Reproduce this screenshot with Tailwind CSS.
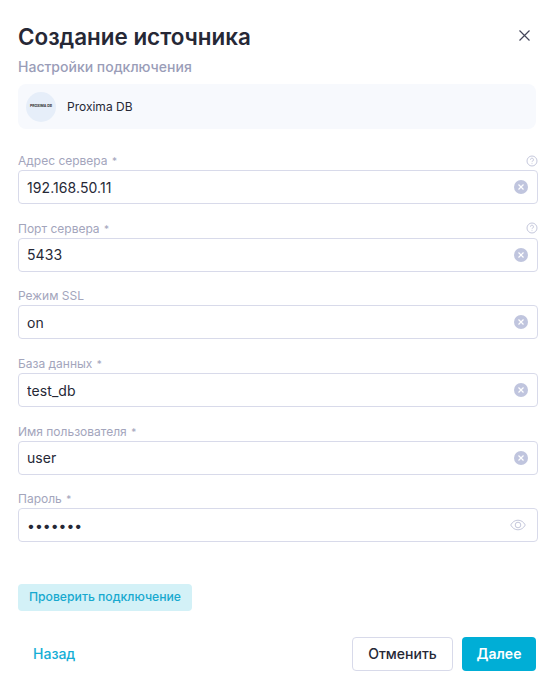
<!DOCTYPE html>
<html lang="ru">
<head>
    <meta charset="UTF-8">
    <meta name="viewport" content="width=device-width, initial-scale=1.0">
    <title>Создание источника</title>
    <script src="https://cdn.jsdelivr.net/npm/@tailwindcss/browser@4"></script>
</head>
<body class="bg-white font-['Inter',sans-serif] text-[#262836]">
<div class="w-[557px] h-[691px] overflow-hidden relative">
    <div class="pl-[18px] pr-[19px] pt-[21px]">
        <div class="flex items-center justify-between h-[32px]">
            <h1 class="text-[22.4px] leading-[32px] font-semibold">Создание источника</h1>
            <button class="mr-[8px] mb-[4px]">
                <svg class="block" width="11" height="11" viewBox="0 0 11 11" fill="none" stroke="#44465a" stroke-width="1.2"><path d="M.5.5l10 10M10.500.5l-10 10"/></svg>
            </button>
        </div>
        <p class="mt-[4px] text-[14px] leading-[20px] font-medium text-[#9a9db8]">Настройки подключения</p>
        <div class="mt-[7px] w-[518px] h-[45px] rounded-[8px] bg-[#f7f9fd] flex items-center pl-[8px]">
            <div class="w-[30px] h-[30px] rounded-full bg-[#e6eef9] flex items-center justify-center text-[3.5px] font-bold text-[#333]">PROXIMA DB</div>
            <span class="ml-[11px] text-[12px] font-normal">Proxima DB</span>
        </div>

        <div class="mt-[23.3px] flex flex-col gap-[15.6px]">
            <div>
                <div class="h-[18px] flex items-center justify-between text-[12px] text-[#a3a5bc]"><label>Адрес сервера <span class="text-[10px] ml-[1px]">*</span></label>
                    <svg class="mb-[1px]" width="12" height="12" viewBox="0 0 12 12" fill="none" stroke="#c5c8dc"><circle cx="6" cy="6" r="5"/><path d="M4.5 4.7a1.5 1.5 0 1 1 2.2 1.3c-.5.3-.7.6-.7 1.1M6 8.300v.8"/></svg>
                </div>
                <div class="relative">
                    <input type="text" value="192.168.50.11" class="w-[520px] h-[34px] rounded-[4px] border border-[#d8daea] pl-[8px] pr-[30px] text-[14px] tracking-[0.08px] outline-none">
                    <svg class="absolute right-[10px] top-[10px]" width="14" height="14" viewBox="0 0 14 14"><circle cx="7" cy="7" r="7" fill="#c0c5de"/><path d="M4.500 4.500l5 5M9.500 4.500l-5 5" stroke="#fff" stroke-width="1.2"/></svg>
                </div>
            </div>
            <div>
                <div class="h-[18px] flex items-center justify-between text-[12px] text-[#a3a5bc]"><label>Порт сервера <span class="text-[10px] ml-[1px]">*</span></label>
                    <svg class="mb-[1px]" width="12" height="12" viewBox="0 0 12 12" fill="none" stroke="#c5c8dc"><circle cx="6" cy="6" r="5"/><path d="M4.5 4.7a1.5 1.5 0 1 1 2.2 1.3c-.5.3-.7.6-.7 1.1M6 8.300v.8"/></svg>
                </div>
                <div class="relative">
                    <input type="text" value="5433" class="w-[520px] h-[34px] rounded-[4px] border border-[#d8daea] pl-[8px] pr-[30px] text-[14px] tracking-[0.08px] outline-none">
                    <svg class="absolute right-[10px] top-[10px]" width="14" height="14" viewBox="0 0 14 14"><circle cx="7" cy="7" r="7" fill="#c0c5de"/><path d="M4.500 4.500l5 5M9.500 4.500l-5 5" stroke="#fff" stroke-width="1.2"/></svg>
                </div>
            </div>
            <div>
                <div class="h-[18px] flex items-center text-[12px] text-[#a3a5bc]"><label>Режим SSL</label></div>
                <div class="relative">
                    <input type="text" value="on" class="w-[520px] h-[34px] rounded-[4px] border border-[#d8daea] pl-[8px] pr-[30px] text-[14px] tracking-[0.08px] outline-none">
                    <svg class="absolute right-[10px] top-[10px]" width="14" height="14" viewBox="0 0 14 14"><circle cx="7" cy="7" r="7" fill="#c0c5de"/><path d="M4.500 4.500l5 5M9.500 4.500l-5 5" stroke="#fff" stroke-width="1.2"/></svg>
                </div>
            </div>
            <div>
                <div class="h-[18px] flex items-center text-[12px] text-[#a3a5bc]"><label>База данных <span class="text-[10px] ml-[1px]">*</span></label></div>
                <div class="relative">
                    <input type="text" value="test_db" class="w-[520px] h-[34px] rounded-[4px] border border-[#d8daea] pl-[8px] pr-[30px] text-[14px] tracking-[0.08px] outline-none">
                    <svg class="absolute right-[10px] top-[10px]" width="14" height="14" viewBox="0 0 14 14"><circle cx="7" cy="7" r="7" fill="#c0c5de"/><path d="M4.500 4.500l5 5M9.500 4.500l-5 5" stroke="#fff" stroke-width="1.2"/></svg>
                </div>
            </div>
            <div>
                <div class="h-[18px] flex items-center text-[12px] text-[#a3a5bc]"><label>Имя пользователя <span class="text-[10px] ml-[1px]">*</span></label></div>
                <div class="relative">
                    <input type="text" value="user" class="w-[520px] h-[34px] rounded-[4px] border border-[#d8daea] pl-[8px] pr-[30px] text-[14px] tracking-[0.08px] outline-none">
                    <svg class="absolute right-[10px] top-[10px]" width="14" height="14" viewBox="0 0 14 14"><circle cx="7" cy="7" r="7" fill="#c0c5de"/><path d="M4.500 4.500l5 5M9.500 4.500l-5 5" stroke="#fff" stroke-width="1.2"/></svg>
                </div>
            </div>
            <div>
                <div class="h-[18px] flex items-center text-[12px] text-[#a3a5bc]"><label>Пароль <span class="text-[10px] ml-[1px]">*</span></label></div>
                <div class="relative">
                    <input type="password" value="1234567" class="w-[520px] h-[34px] rounded-[4px] border border-[#d8daea] pl-[8px] pr-[30px] text-[14px] outline-none">
                    <svg class="absolute right-[12px] top-[11px]" width="16" height="12" viewBox="0 0 16 12" fill="none" stroke="#c5c8dc"><path d="M.7 6C2.500 2.800 5 1.200 8 1.200S13.500 2.800 15.300 6C13.500 9.200 11 10.800 8 10.800S2.500 9.200.7 6z"/><circle cx="8" cy="6" r="2.800"/></svg>
                </div>
            </div>
        </div>

        <button class="mt-[41.7px] block w-[174px] h-[27px] rounded-[4px] bg-[#d3f1f7] text-[12.2px] font-medium text-[#17a9cf]">Проверить подключение</button>

        <div class="mt-[26px] flex items-center">
            <a href="#" class="ml-[15px] text-[14px] font-medium text-[#14aed6]">Назад</a>
            <button class="ml-auto w-[101px] h-[34px] rounded-[4px] border border-[#d8daea] bg-white text-[14px] font-medium">Отменить</button>
            <button class="ml-[9px] mr-[2px] w-[74px] h-[34px] rounded-[4px] bg-[#00aed6] text-[14px] font-semibold text-white">Далее</button>
        </div>
    </div>
</div>
</body>
</html>
